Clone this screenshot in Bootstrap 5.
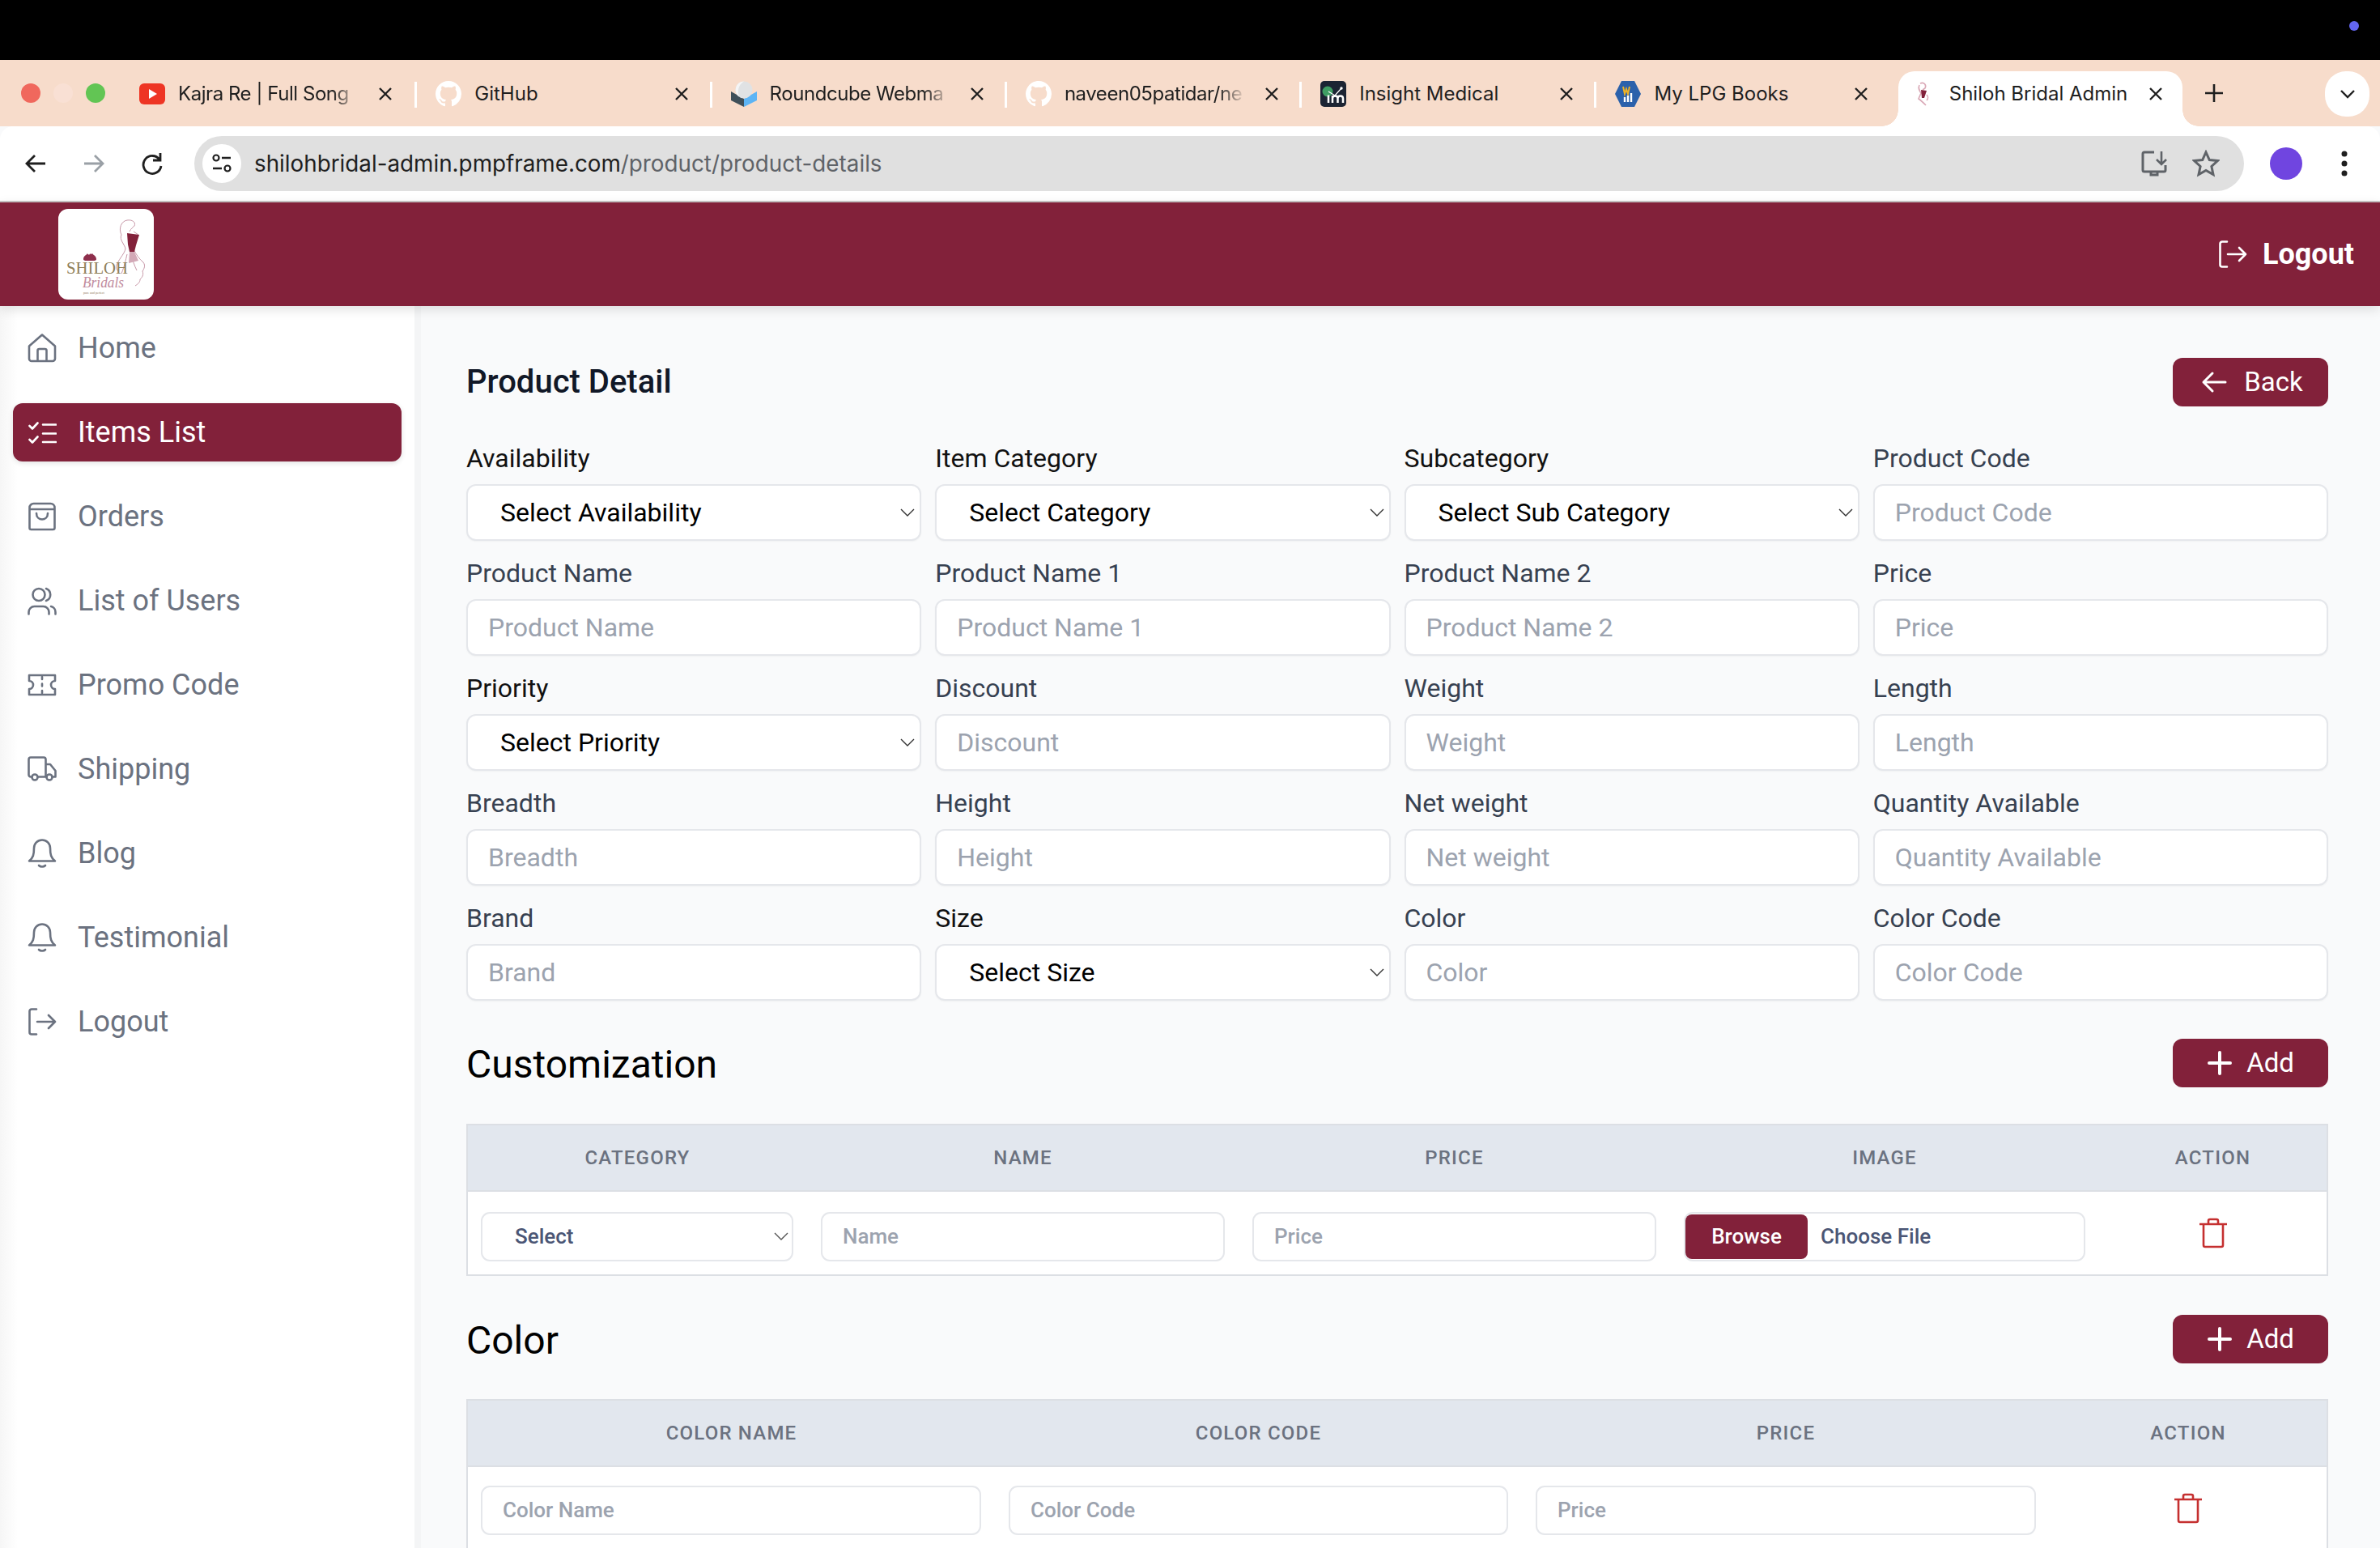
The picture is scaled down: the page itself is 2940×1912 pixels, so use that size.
<!DOCTYPE html>
<html lang="en">
<head>
    <meta charset="UTF-8">
    <meta name="viewport" content="width=device-width, initial-scale=1.0">
    <title>Shiloh Bridal Admin</title>
    <link href="https://cdn.jsdelivr.net/npm/bootstrap@5.3.0/dist/css/bootstrap.min.css" rel="stylesheet">
    <style>
        html, body { height: 1912px; overflow: hidden; }
        body { font-family: Roboto, "Liberation Sans", sans-serif; background: #f9fafb; color: #111827; }

        /* browser chrome */
        .os-bar { height: 74px; background: #000; padding: 26px 26px 0 0; }
        .os-dot { width: 12px; height: 12px; border-radius: 50%; background: #6366f1; }
        .tab-strip { height: 82px; background: #f7dccb; font-family: Inter, Roboto, sans-serif; font-size: 24px; color: #1f1f1f; }
        .lights { width: 151px; padding: 29px 0 0 26px; gap: 16px; }
        .lights span { width: 24px; height: 24px; border-radius: 50%; }
        .tab-item { width: 364.3px; height: 68px; margin-top: 14px; padding: 0 0 12px 21px; position: relative; }
        .tab-item + .tab-item { padding-left: 23px; }
        .tab-item::after { content: ""; position: absolute; right: 0; top: 13px; width: 3px; height: 32px; background: #fff; }
        .tab-item.no-sep::after { display: none; }
        .tab-ico { width: 32px; height: 32px; flex: none; }
        .tab-name { width: 218px; margin-left: 16px; white-space: nowrap; overflow: hidden; }
        .tab-item + .tab-item .tab-name { width: 216px; }
        .tab-item .tab-name.fading { width: 224px; letter-spacing: -.45px; -webkit-mask-image: linear-gradient(90deg, #000 85%, transparent); mask-image: linear-gradient(90deg, #000 85%, transparent); }
        .tab-x { width: 20px; height: 20px; margin-left: 30px; flex: none; }
        .tab-name.fading + .tab-x { margin-left: 22px; }
        .tab-item.tab-on { width: 351px; margin-left: 8px; padding-left: 15px; background: #fff; border-radius: 20px 20px 0 0; }
        .tab-on::before, .tab-on::after { content: ""; position: absolute; bottom: 0; top: auto; width: 20px; height: 20px; background: radial-gradient(circle at var(--cx) 0, #f7dccb 19.5px, #fff 20px); }
        .tab-on::before { left: -20px; --cx: 0; }
        .tab-on::after { right: -20px; --cx: 20px; }
        .tab-item.tab-on .tab-name { width: 222px; }
        .tab-on .tab-x { margin-left: 23px; }
        .tab-plus { width: 26px; height: 26px; margin: 28px 0 0 26px; }
        .tab-more { width: 55px; height: 56px; margin: 14px 13px 0 auto; background: #fff; border-radius: 26px; }

        .tool-bar { height: 94px; background: #fff; border-bottom: 2px solid #c9c6c6; border-radius: 16px 16px 0 0; padding-left: 28px; }
        .nav-arrow { width: 32px; height: 32px; flex: none; margin-right: 40px; }
        .omni { width: 2532px; height: 68px; margin-left: -4px; border-radius: 34px; background: #e0e0e0; font-family: Inter, Roboto, sans-serif; font-size: 27.8px; padding: 0 30px 0 10px; }
        .omni-chip { width: 48px; height: 48px; border-radius: 50%; background: #fff; margin-right: 16px; }
        .omni-host { color: #1f1f1f; padding-top: 2px; }
        .omni-path { color: #5f6368; padding-top: 2px; }
        .omni-star { margin-left: 30px; }
        .avatar-dot { width: 40px; height: 40px; border-radius: 50%; background: #7045e0; margin-left: 32px; }
        .menu-dots { margin-left: 48px; }

        /* app */
        .top-head { height: 128px; background: #82213a; box-shadow: 0 4px 14px rgba(0, 0, 0, .12); position: relative; z-index: 2; padding: 8px 32px 8px 72px; }
        .logo-box { width: 118px; height: 112px; background: #fff; border-radius: 12px; }
        .head-out { color: #fff; font-size: 36px; font-weight: 700; gap: 19px; }
        .head-out svg { width: 36px; height: 36px; }
        .side-col { width: 512px; flex: none; height: 1534px; padding: 16px; background: linear-gradient(90deg, #f6f6f6, #fff 22px); box-shadow: 8px 0 0 #f4f5f6; }
        .side-link { height: 72px; margin-bottom: 32px; padding-left: 18px; gap: 26px; color: #6b7280; font-size: 36px; border-radius: 12px; }
        .side-link svg { width: 36px; height: 36px; flex: none; }
        .line-ico { fill: none; stroke: currentColor; stroke-width: 2.6; stroke-linecap: round; stroke-linejoin: round; }
        .side-link.on { background: #82213a; color: #fff; box-shadow: 0 2px 6px rgba(0, 0, 0, .12); }
        .main-col { padding: 64px 64px 0; min-width: 0; flex: 1; }
        .block-head { height: 60px; }
        .block-head.gap-a { margin-top: 47px; }
        .block-head.gap-b { margin-top: 48px; }
        .block-title { font-size: 40px; font-weight: 500; color: #111827; margin: 0; }
        .block-title2 { font-size: 48px; font-weight: 400; color: #000; margin: 3px 0 0; }
        .wine-btn { height: 60px; width: 192px; background: #82213a; color: #fff; font-size: 33px; border: 0; border-radius: 12px; padding: 0; gap: 17px; }
        .wine-btn.back-btn { padding-left: 4px; gap: 21px; }
        .wine-btn:hover { background: #82213a; color: #fff; }
        .wine-btn svg { width: 32px; height: 32px; }

        .form-grid { --bs-gutter-x: 17px; --bs-gutter-y: 20px; margin-top: 24px; }
        .field-label { display: block; height: 40px; line-height: 40px; margin-bottom: 12px; font-size: 32px; color: #374151; }
        .field-label.dark { color: #111; }
        .field-box, .field-pick { height: 70px; border: 2px solid #e5e7eb; border-radius: 12px; font-size: 32px; padding: 0 25px; background-color: #fff; color: #000; box-shadow: 0 1px 2px rgba(0, 0, 0, .04); }
        .field-box::placeholder { color: #9ca3af; opacity: 1; }
        .field-pick { padding-left: 40px; background-image: url("data:image/svg+xml,%3csvg xmlns='http://www.w3.org/2000/svg' viewBox='0 0 18 10'%3e%3cpath fill='none' stroke='%23333' stroke-width='1.4' d='M1 1l8 8 8-8'/%3e%3c/svg%3e"); background-size: 18px 10px; background-position: right 6px center; }

        .grid-wrap { margin-top: 45px; }
        .grid-wrap.tight { margin-top: 44px; }
        .data-grid { width: 100%; table-layout: fixed; border-collapse: collapse; margin: 0; border-left: 2px solid #dcdfe4; border-right: 2px solid #dcdfe4; }
        .data-grid th { height: 82px; background: #e2e7ee; border: 2px solid #dcdfe4; border-width: 2px 0; color: #6b7280; font-size: 24px; font-weight: 500; letter-spacing: 1.2px; text-align: center; text-transform: uppercase; vertical-align: middle; padding: 0; }
        .data-grid td { height: 104px; background: #fff; border-bottom: 2px solid #dcdfe4; padding: 4px 17px 0; vertical-align: middle; text-align: center; }
        .data-grid td:first-child { padding-left: 16px; }
        .data-grid.low-row td { padding-top: 8px; }
        .data-grid td.bin-cell { padding-top: 0; }
        .mini-box, .mini-pick { height: 61px; border: 2px solid #e5e7eb; border-radius: 11px; font-size: 26px; font-weight: 500; padding: 0 25px; background-color: #fff; color: #4b5675; }
        .mini-box::placeholder { color: #9ca3af; opacity: 1; }
        .mini-pick { padding-left: 40px; background-image: url("data:image/svg+xml,%3csvg xmlns='http://www.w3.org/2000/svg' viewBox='0 0 18 10'%3e%3cpath fill='none' stroke='%23555' stroke-width='1.4' d='M1 1l8 8 8-8'/%3e%3c/svg%3e"); background-size: 18px 10px; background-position: right 4px center; }
        .file-box { height: 61px; border: 2px solid #e5e7eb; border-radius: 11px; background: #fff; padding: 1px 0; font-size: 26px; font-weight: 500; color: #4b5675; gap: 16px; }
        .file-btn { width: 151px; height: 100%; background: #82213a; color: #fff; border-radius: 8px; }
        .bin-ico { width: 36px; height: 38px; }
        .w-cat { width: 420px; } .w-nm { width: 533px; } .w-pr { width: 533px; } .w-img { width: 530px; }
        .w-c1 { width: 652px; } .w-c2 { width: 651px; } .w-c3 { width: 652px; }
    </style>
</head>
<body>
    <div class="os-bar d-flex justify-content-end"><span class="os-dot"></span></div>

    <!-- browser tabs -->
    <div class="tab-strip d-flex">
        <div class="lights d-flex">
            <span style="background:#f0685d"></span><span style="background:#f9e0d4"></span><span style="background:#62c554"></span>
        </div>
        <div class="tab-item d-flex align-items-center">
            <svg class="tab-ico" viewBox="0 0 32 32"><rect y="3" width="32" height="26" rx="6" fill="#ee3524"/><path d="M12 10l10 6-10 6z" fill="#fff"/></svg>
            <span class="tab-name fading">Kajra Re | Full Song</span>
            <svg class="tab-x" viewBox="0 0 20 20"><path d="M3 3l14 14M17 3L3 17" stroke="#1f1f1f" stroke-width="2.4"/></svg>
        </div>
        <div class="tab-item d-flex align-items-center">
            <svg class="tab-ico" viewBox="0 0 16 16"><path fill="#fff" d="M8 0C3.58 0 0 3.58 0 8c0 3.54 2.29 6.53 5.47 7.59.4.07.55-.17.55-.38 0-.19-.01-.82-.01-1.49-2.01.37-2.53-.49-2.69-.94-.09-.23-.48-.94-.82-1.13-.28-.15-.68-.52-.01-.53.63-.01 1.08.58 1.23.82.72 1.21 1.87.87 2.33.66.07-.52.28-.87.51-1.07-1.78-.2-3.64-.89-3.64-3.95 0-.87.31-1.59.82-2.15-.08-.2-.36-1.02.08-2.12 0 0 .67-.21 2.2.82.64-.18 1.32-.27 2-.27.68 0 1.36.09 2 .27 1.53-1.04 2.2-.82 2.2-.82.44 1.1.16 1.92.08 2.12.51.56.82 1.27.82 2.15 0 3.07-1.87 3.75-3.65 3.95.29.25.54.73.54 1.48 0 1.07-.01 1.93-.01 2.2 0 .21.15.46.55.38A8.013 8.013 0 0016 8c0-4.42-3.58-8-8-8z"/></svg>
            <span class="tab-name">GitHub</span>
            <svg class="tab-x" viewBox="0 0 20 20"><path d="M3 3l14 14M17 3L3 17" stroke="#1f1f1f" stroke-width="2.4"/></svg>
        </div>
        <div class="tab-item d-flex align-items-center">
            <svg class="tab-ico" viewBox="0 0 32 32"><path d="M0 13l16 9v10L0 24z" fill="#3f4f59"/><path d="M32 13l-16 9v10l16-8z" fill="#5cb4f5"/><circle cx="16" cy="11" r="10.500" fill="#e0e2e4"/><path d="M16 .5a10.500 10.500 0 0 0-6 19c-2-6-2-14 6-19z" fill="#f4f5f6"/></svg>
            <span class="tab-name fading">Roundcube Webma</span>
            <svg class="tab-x" viewBox="0 0 20 20"><path d="M3 3l14 14M17 3L3 17" stroke="#1f1f1f" stroke-width="2.4"/></svg>
        </div>
        <div class="tab-item d-flex align-items-center">
            <svg class="tab-ico" viewBox="0 0 16 16"><path fill="#fff" d="M8 0C3.58 0 0 3.58 0 8c0 3.54 2.29 6.53 5.47 7.59.4.07.55-.17.55-.38 0-.19-.01-.82-.01-1.49-2.01.37-2.53-.49-2.69-.94-.09-.23-.48-.94-.82-1.13-.28-.15-.68-.52-.01-.53.63-.01 1.08.58 1.23.82.72 1.21 1.87.87 2.33.66.07-.52.28-.87.51-1.07-1.78-.2-3.64-.89-3.64-3.95 0-.87.31-1.59.82-2.15-.08-.2-.36-1.02.08-2.12 0 0 .67-.21 2.2.82.64-.18 1.32-.27 2-.27.68 0 1.36.09 2 .27 1.53-1.04 2.2-.82 2.2-.82.44 1.1.16 1.92.08 2.12.51.56.82 1.27.82 2.15 0 3.07-1.87 3.75-3.65 3.95.29.25.54.73.54 1.48 0 1.07-.01 1.93-.01 2.2 0 .21.15.46.55.38A8.013 8.013 0 0016 8c0-4.42-3.58-8-8-8z"/></svg>
            <span class="tab-name fading">naveen05patidar/ne</span>
            <svg class="tab-x" viewBox="0 0 20 20"><path d="M3 3l14 14M17 3L3 17" stroke="#1f1f1f" stroke-width="2.4"/></svg>
        </div>
        <div class="tab-item d-flex align-items-center">
            <svg class="tab-ico" viewBox="0 0 32 32"><rect width="32" height="32" rx="5" fill="#1c2433"/><circle cx="9" cy="13" r="6.500" fill="#3f9e63"/><path d="M10 13l8 5 8-9" stroke="#fff" stroke-width="1.300" fill="none"/><circle cx="26" cy="9" r="1.700" fill="#fff"/><path d="M10 17.500V27M15 18v9M15 21.500q0-3 3.250-3t3.250 3V27M21.500 21.500q0-3 3.250-3t3.250 3V27" stroke="#fff" stroke-width="2.500" fill="none"/></svg>
            <span class="tab-name">Insight Medical</span>
            <svg class="tab-x" viewBox="0 0 20 20"><path d="M3 3l14 14M17 3L3 17" stroke="#1f1f1f" stroke-width="2.4"/></svg>
        </div>
        <div class="tab-item no-sep d-flex align-items-center">
            <svg class="tab-ico" viewBox="0 0 32 32"><path d="M8 0h16l8 16-8 16H8L0 16z" fill="#2b61ab"/><path d="M10 7l2 9 2-6 2 6 2-9" stroke="#f0b323" stroke-width="2" fill="none"/><path d="M12 26v-6M16 26v-8M20 26v-11" stroke="#fff" stroke-width="2.400"/></svg>
            <span class="tab-name">My LPG Books</span>
            <svg class="tab-x" viewBox="0 0 20 20"><path d="M3 3l14 14M17 3L3 17" stroke="#1f1f1f" stroke-width="2.4"/></svg>
        </div>
        <div class="tab-item tab-on d-flex align-items-center">
            <svg class="tab-ico" viewBox="0 0 32 32"><path d="M12 3c5-2 8 2 6 6l-3 2M11 5c-2 4 0 7 2 10l-3 7c3 2 6 5 9 8M20 24c2-2 2-5 0-7" fill="none" stroke="#d9a8b6" stroke-width="1.600"/><path d="M13 11l7 1-3 9h-3z" fill="#82213a"/></svg>
            <span class="tab-name">Shiloh Bridal Admin</span>
            <svg class="tab-x" viewBox="0 0 20 20"><path d="M3 3l14 14M17 3L3 17" stroke="#1f1f1f" stroke-width="2.4"/></svg>
        </div>
        <svg class="tab-plus" viewBox="0 0 26 26"><path d="M13 2v22M2 13h22" stroke="#1f1f1f" stroke-width="2.6"/></svg>
        <div class="tab-more d-flex align-items-center justify-content-center">
            <svg width="18" height="12" viewBox="0 0 18 12"><path d="M1 2l8 8 8-8" fill="none" stroke="#1f1f1f" stroke-width="2.400"/></svg>
        </div>
    </div>

    <!-- address bar -->
    <div class="tool-bar d-flex align-items-center">
        <svg class="nav-arrow" viewBox="0 0 32 32"><path d="M28 16H6M15 6L5 16l10 10" fill="none" stroke="#1f1f1f" stroke-width="2.800"/></svg>
        <svg class="nav-arrow" viewBox="0 0 32 32"><path d="M4 16h22M17 6l10 10-10 10" fill="none" stroke="#9aa0a6" stroke-width="2.800"/></svg>
        <svg class="nav-arrow" viewBox="0 0 32 32"><path d="M25 11a11 11 0 1 0 2 8M26 3v9h-9" fill="none" stroke="#1f1f1f" stroke-width="2.800"/></svg>
        <div class="omni d-flex align-items-center">
            <div class="omni-chip d-flex align-items-center justify-content-center">
                <svg width="28" height="28" viewBox="0 0 28 28"><circle cx="7" cy="7" r="3.500" fill="none" stroke="#1f1f1f" stroke-width="2.200"/><path d="M14 7h11M3 20h11" stroke="#1f1f1f" stroke-width="2.400"/><circle cx="21" cy="20" r="3.500" fill="none" stroke="#1f1f1f" stroke-width="2.200"/></svg>
            </div>
            <span class="omni-host">shilohbridal-admin.pmpframe.com</span><span class="omni-path">/product/product-details</span>
            <svg class="ms-auto" width="34" height="34" viewBox="0 0 34 34"><path d="M17 3H5a2 2 0 0 0-2 2v20a2 2 0 0 0 2 2h24a2 2 0 0 0 2-2v-6M13 27v4h8v-4" fill="none" stroke="#5f6368" stroke-width="3"/><path d="M26 2v15M20 12l6 6 6-6" fill="none" stroke="#5f6368" stroke-width="2.600"/></svg>
            <svg class="omni-star" width="34" height="34" viewBox="0 0 34 34"><path d="M17 3l4.300 9.500 10.200 1.100-7.600 6.900 2.100 10.100L17 25.500l-9 5.100 2.100-10.100-7.600-6.900 10.200-1.100z" fill="none" stroke="#5f6368" stroke-width="3"/></svg>
        </div>
        <span class="avatar-dot"></span>
        <svg class="menu-dots" width="8" height="32" viewBox="0 0 8 32"><circle cx="4" cy="4" r="3.500" fill="#1f1f1f"/><circle cx="4" cy="16" r="3.500" fill="#1f1f1f"/><circle cx="4" cy="28" r="3.500" fill="#1f1f1f"/></svg>
    </div>

    <!-- app header -->
    <header class="top-head d-flex align-items-center justify-content-between">
        <div class="logo-box">
            <svg width="118" height="112" viewBox="0 0 118 112">
                <g fill="none" stroke="#c08a9c" stroke-width=".9">
                    <path d="M78 32c-4-8 0-17 7-18 7-1 11 3 9 7-2 2-4 3-6 7"/>
                    <path d="M78 32c-3 6 4 12 5 17-1 6-6 10-11 20-1 4 0 6 2 8M93 28l6 4"/>
                    <path d="M93 50c3 6 7 12 12 16 3 4 1 8-1 11 2 5-1 8-3 10 0 4-3 6-6 8M85 56c-2 8-3 14-7 24M90 56c2 8 4 14 7 20"/>
                </g>
                <path d="M85 30l15 2-4 13-2 8h-6l-2-9z" fill="#82213a"/>
                <path d="M88 53h6l5 11-12 3z" fill="#d3a9b7"/>
                <path d="M31 62c0-4 4-5 5-7 1 2 3 2 3 0 2 2 2 0 3 0 1 2 5 3 5 7 0 2-3 2-4 2h-8c-1 0-4 0-4-2z" fill="#8e2f4c"/>
                <text x="10" y="80" font-family="Liberation Serif, serif" font-size="22" fill="#8f8059" textLength="76" lengthAdjust="spacingAndGlyphs">SHILOH</text>
                <text x="30" y="97" font-family="Liberation Serif, serif" font-style="italic" font-size="19" fill="#c08a9c" textLength="51" lengthAdjust="spacingAndGlyphs">Bridals</text>
                <text x="31" y="105" font-family="Liberation Serif, serif" font-size="4" fill="#8f8059">pure and perfect</text>
            </svg>
        </div>
        <div class="head-out d-flex align-items-center">
            <svg class="line-ico" viewBox="0 0 36 36"><path d="M11 2.500H5A2.500 2.500 0 0 0 2.500 5v26A2.500 2.500 0 0 0 5 33.500h6M12 18h22M26 10l8 8-8 8"/></svg>
            <span>Logout</span>
        </div>
    </header>

    <div class="d-flex">
        <nav class="side-col d-flex flex-column">
            <a class="side-link d-flex align-items-center text-decoration-none">
                <svg class="line-ico" viewBox="0 0 36 36"><path d="M2 15.500L18 1.500l16 14V31a3 3 0 0 1-3 3H5a3 3 0 0 1-3-3zM12.500 34V21a2 2 0 0 1 2-2h7a2 2 0 0 1 2 2v13"/></svg>
                Home
            </a>
            <a class="side-link on d-flex align-items-center text-decoration-none">
                <svg class="line-ico" viewBox="0 0 36 36"><path d="M2.500 10l3.500 3.500 6.500-7M2.500 27l3.500 3.500 6.500-7M19 8.500h16M19 19.500h16M19 30h16"/></svg>
                Items List
            </a>
            <a class="side-link d-flex align-items-center text-decoration-none">
                <svg class="line-ico" viewBox="0 0 36 36"><path d="M2.500 9V7a5 5 0 0 1 5-5h21a5 5 0 0 1 5 5v25a2 2 0 0 1-2 2h-27a2 2 0 0 1-2-2zM2.500 9h31M11 14c0 10 14 10 14 0"/></svg>
                Orders
            </a>
            <a class="side-link d-flex align-items-center text-decoration-none">
                <svg class="line-ico" viewBox="0 0 36 36"><circle cx="14" cy="10.500" r="7.500"/><path d="M1.500 34.500V32a7 7 0 0 1 7-7h11a7 7 0 0 1 7 7v2.500M23 3a8 8 0 0 1 0 15M29 25a7 7 0 0 1 5.500 7v2.500"/></svg>
                List of Users
            </a>
            <a class="side-link d-flex align-items-center text-decoration-none">
                <svg class="line-ico" viewBox="0 0 36 36"><path d="M2 6h32v7a5 5 0 0 0 0 10v7H2v-7a5 5 0 0 0 0-10zM18 8v3M18 16.500v3M18 25v3"/></svg>
                Promo Code
            </a>
            <a class="side-link d-flex align-items-center text-decoration-none">
                <svg class="line-ico" viewBox="0 0 36 36"><path d="M5 27.500H4A2.500 2.500 0 0 1 1.500 25V6A2.500 2.500 0 0 1 4 3.500h16A2.500 2.500 0 0 1 22.500 6v21.500H13M22.500 12H28l6.500 8v7.500H31M22.500 27.500h1"/><circle cx="9" cy="28" r="3.500"/><circle cx="27" cy="28" r="3.500"/></svg>
                Shipping
            </a>
            <a class="side-link d-flex align-items-center text-decoration-none">
                <svg class="line-ico" viewBox="0 0 36 36"><path d="M18 1.500a10 10 0 0 0-10 10c0 8-1 12-6 16h32c-5-4-6-8-6-16a10 10 0 0 0-10-10zM14 33c2 2 6 2 8 0"/></svg>
                Blog
            </a>
            <a class="side-link d-flex align-items-center text-decoration-none">
                <svg class="line-ico" viewBox="0 0 36 36"><path d="M18 1.500a10 10 0 0 0-10 10c0 8-1 12-6 16h32c-5-4-6-8-6-16a10 10 0 0 0-10-10zM14 33c2 2 6 2 8 0"/></svg>
                Testimonial
            </a>
            <a class="side-link d-flex align-items-center text-decoration-none">
                <svg class="line-ico" viewBox="0 0 36 36"><path d="M11 2.500H5A2.500 2.500 0 0 0 2.500 5v26A2.500 2.500 0 0 0 5 33.500h6M12 18h22M26 10l8 8-8 8"/></svg>
                Logout
            </a>
        </nav>

        <main class="main-col">
            <div class="block-head d-flex align-items-center justify-content-between">
                <h1 class="block-title">Product Detail</h1>
                <button type="button" class="btn wine-btn back-btn d-flex align-items-center justify-content-center">
                    <svg viewBox="0 0 32 32"><path d="M30 16H3M14 5L3 16l11 11" fill="none" stroke="#fff" stroke-width="3" stroke-linecap="round" stroke-linejoin="round"/></svg>
                    Back
                </button>
            </div>

            <form class="row form-grid">
                <div class="col-3"><label class="field-label dark">Availability</label><select class="form-select field-pick"><option>Select Availability</option></select></div>
                <div class="col-3"><label class="field-label dark">Item Category</label><select class="form-select field-pick"><option>Select Category</option></select></div>
                <div class="col-3"><label class="field-label dark">Subcategory</label><select class="form-select field-pick"><option>Select Sub Category</option></select></div>
                <div class="col-3"><label class="field-label">Product Code</label><input class="form-control field-box" placeholder="Product Code"></div>

                <div class="col-3"><label class="field-label">Product Name</label><input class="form-control field-box" placeholder="Product Name"></div>
                <div class="col-3"><label class="field-label">Product Name 1</label><input class="form-control field-box" placeholder="Product Name 1"></div>
                <div class="col-3"><label class="field-label">Product Name 2</label><input class="form-control field-box" placeholder="Product Name 2"></div>
                <div class="col-3"><label class="field-label">Price</label><input class="form-control field-box" placeholder="Price"></div>

                <div class="col-3"><label class="field-label dark">Priority</label><select class="form-select field-pick"><option>Select Priority</option></select></div>
                <div class="col-3"><label class="field-label">Discount</label><input class="form-control field-box" placeholder="Discount"></div>
                <div class="col-3"><label class="field-label">Weight</label><input class="form-control field-box" placeholder="Weight"></div>
                <div class="col-3"><label class="field-label">Length</label><input class="form-control field-box" placeholder="Length"></div>

                <div class="col-3"><label class="field-label">Breadth</label><input class="form-control field-box" placeholder="Breadth"></div>
                <div class="col-3"><label class="field-label">Height</label><input class="form-control field-box" placeholder="Height"></div>
                <div class="col-3"><label class="field-label">Net weight</label><input class="form-control field-box" placeholder="Net weight"></div>
                <div class="col-3"><label class="field-label">Quantity Available</label><input class="form-control field-box" placeholder="Quantity Available"></div>

                <div class="col-3"><label class="field-label">Brand</label><input class="form-control field-box" placeholder="Brand"></div>
                <div class="col-3"><label class="field-label dark">Size</label><select class="form-select field-pick"><option>Select Size</option></select></div>
                <div class="col-3"><label class="field-label">Color</label><input class="form-control field-box" placeholder="Color"></div>
                <div class="col-3"><label class="field-label">Color Code</label><input class="form-control field-box" placeholder="Color Code"></div>
            </form>

            <div class="block-head gap-a d-flex align-items-center justify-content-between">
                <h2 class="block-title2">Customization</h2>
                <button type="button" class="btn wine-btn d-flex align-items-center justify-content-center">
                    <svg viewBox="0 0 32 32"><path d="M16 3v26M3 16h26" stroke="#fff" stroke-width="4" stroke-linecap="round"/></svg>
                    Add
                </button>
            </div>
            <div class="grid-wrap">
                <table class="data-grid low-row">
                    <colgroup><col class="w-cat"><col class="w-nm"><col class="w-pr"><col class="w-img"><col></colgroup>
                    <thead><tr><th>Category</th><th>Name</th><th>Price</th><th>Image</th><th>Action</th></tr></thead>
                    <tbody>
                        <tr>
                            <td><select class="form-select mini-pick"><option>Select</option></select></td>
                            <td><input class="form-control mini-box" placeholder="Name"></td>
                            <td><input class="form-control mini-box" placeholder="Price"></td>
                            <td><div class="file-box d-flex align-items-center text-start"><span class="file-btn d-flex align-items-center justify-content-center">Browse</span>Choose File</div></td>
                            <td class="bin-cell"><svg class="bin-ico" viewBox="0 0 36 38" fill="none" stroke="#c53030" stroke-width="2.600"><path d="M1 8h34M6 8v26a2 2 0 0 0 2 2h20a2 2 0 0 0 2-2V8M12 8V4a2 2 0 0 1 2-2h8a2 2 0 0 1 2 2v4"/></svg></td>
                        </tr>
                    </tbody>
                </table>
            </div>

            <div class="block-head gap-b d-flex align-items-center justify-content-between">
                <h2 class="block-title2">Color</h2>
                <button type="button" class="btn wine-btn d-flex align-items-center justify-content-center">
                    <svg viewBox="0 0 32 32"><path d="M16 3v26M3 16h26" stroke="#fff" stroke-width="4" stroke-linecap="round"/></svg>
                    Add
                </button>
            </div>
            <div class="grid-wrap tight">
                <table class="data-grid">
                    <colgroup><col class="w-c1"><col class="w-c2"><col class="w-c3"><col></colgroup>
                    <thead><tr><th>Color Name</th><th>Color Code</th><th>Price</th><th>Action</th></tr></thead>
                    <tbody>
                        <tr>
                            <td><input class="form-control mini-box" placeholder="Color Name"></td>
                            <td><input class="form-control mini-box" placeholder="Color Code"></td>
                            <td><input class="form-control mini-box" placeholder="Price"></td>
                            <td class="bin-cell"><svg class="bin-ico" viewBox="0 0 36 38" fill="none" stroke="#c53030" stroke-width="2.600"><path d="M1 8h34M6 8v26a2 2 0 0 0 2 2h20a2 2 0 0 0 2-2V8M12 8V4a2 2 0 0 1 2-2h8a2 2 0 0 1 2 2v4"/></svg></td>
                        </tr>
                    </tbody>
                </table>
            </div>
        </main>
    </div>

    <script src="https://cdn.jsdelivr.net/npm/bootstrap@5.3.0/dist/js/bootstrap.bundle.min.js"></script>
</body>
</html>
